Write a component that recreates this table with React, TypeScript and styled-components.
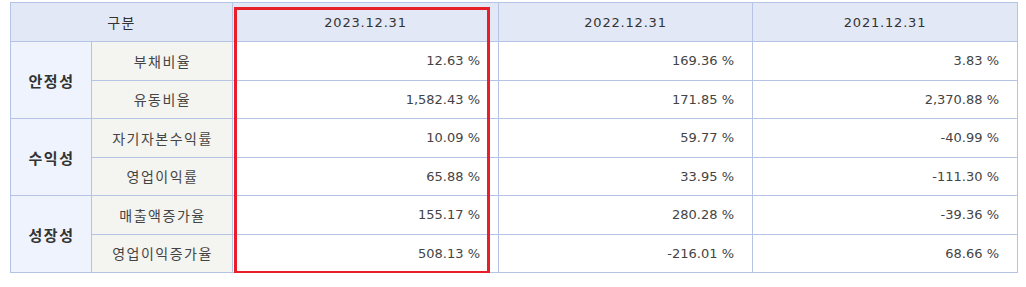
import React, { FC } from 'react';
import styled, { createGlobalStyle } from 'styled-components';

const GlobalStyle = createGlobalStyle`
  body {
    margin: 0;
    background: #ffffff;
    font-family: "DejaVu Sans", "Noto Sans CJK KR", sans-serif;
  }
`;

const Wrapper = styled.div`
  position: relative;
  padding: 2px 10px 0;
`;

const Table = styled.table`
  width: 1007px;
  border-collapse: collapse;
  table-layout: fixed;
  font-size: 13px;
  color: #3c3c3c;
`;

const Col = styled.col<{ $w: number }>`
  width: ${ props => props.$w }px;
`;

const HeadCell = styled.th<{ $korean?: boolean }>`
  height: 38px;
  padding: 0;
  border: 1px solid #b5c4e4;
  background: #e2e8f5;
  font-weight: normal;
  font-size: ${ props => props.$korean ? 14 : 13 }px;
  letter-spacing: ${ props => props.$korean ? 1.5 : 0.8 }px;
  text-align: center;
  color: #333333;
`;

const Row = styled.tr`
  height: 38.5px;
`;

const GroupCell = styled.th`
  padding: 0 0 0 1px;
  border: 1px solid #b5c4e4;
  background: #eef3fd;
  font-weight: bold;
  font-size: 15px;
  letter-spacing: 1.5px;
  color: #333333;
  text-align: center;
`;

const LabelCell = styled.td`
  padding: 0 0 0 1px;
  border: 1px solid #b5c4e4;
  background: #f4f4f0;
  text-align: center;
  font-size: 14px;
  letter-spacing: 1.5px;
  color: #444444;
`;

const ValueCell = styled.td`
  padding: 0 18px 0 0;
  border: 1px solid #b5c4e4;
  background: #ffffff;
  text-align: right;
  color: #444444;
`;

const Highlight = styled.div`
  position: absolute;
  left: 234px;
  top: 7px;
  width: 256px;
  height: 267px;
  box-sizing: border-box;
  border: 3px solid #e81e28;
  pointer-events: none;
`;

interface Metric {
  label: string;
  values: string[];
}

interface Group {
  name: string;
  metrics: Metric[];
}

const widths = [81, 141, 266, 254, 265];

const periods = ['2023.12.31', '2022.12.31', '2021.12.31'];

const groups: Group[] = [
  {
    name: '안정성',
    metrics: [
      { label: '부채비율', values: ['12.63', '169.36', '3.83'] },
      { label: '유동비율', values: ['1,582.43', '171.85', '2,370.88'] },
    ],
  },
  {
    name: '수익성',
    metrics: [
      { label: '자기자본수익률', values: ['10.09', '59.77', '-40.99'] },
      { label: '영업이익률', values: ['65.88', '33.95', '-111.30'] },
    ],
  },
  {
    name: '성장성',
    metrics: [
      { label: '매출액증가율', values: ['155.17', '280.28', '-39.36'] },
      { label: '영업이익증가율', values: ['508.13', '-216.01', '68.66'] },
    ],
  },
];

const App: FC = () => (
  <Wrapper>
    <GlobalStyle />
    <Table>
      <colgroup>
        { widths.map((w, i) => <Col key={ i } $w={ w } />) }
      </colgroup>
      <thead>
        <tr>
          <HeadCell colSpan={ 2 } $korean>구분</HeadCell>
          { periods.map(p => <HeadCell key={ p }>{ p }</HeadCell>) }
        </tr>
      </thead>
      <tbody>
        { groups.map(g => g.metrics.map((m, i) => (
          <Row key={ m.label }>
            { i === 0 && <GroupCell rowSpan={ g.metrics.length }>{ g.name }</GroupCell> }
            <LabelCell>{ m.label }</LabelCell>
            { m.values.map((v, j) => <ValueCell key={ j }>{ v } %</ValueCell>) }
          </Row>
        ))) }
      </tbody>
    </Table>
    <Highlight />
  </Wrapper>
);

export default App;
